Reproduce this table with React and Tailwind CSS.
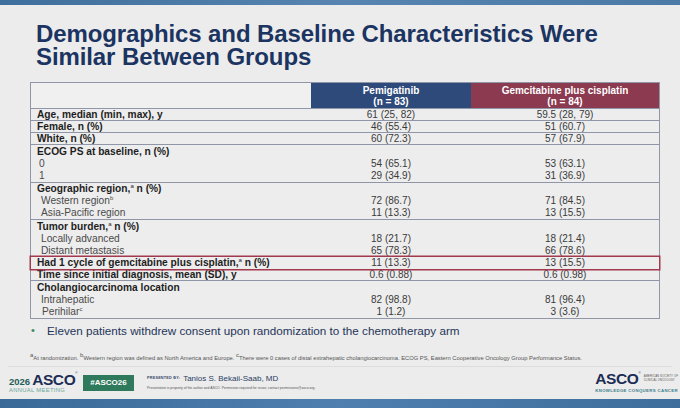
import React from "react";

const F = { fontFamily: '"Liberation Sans", Arial, sans-serif' };

function Row({ label, a, b, bold = true, indent = 0, cls = "" }) {
  return (
    <div className={"grid grid-cols-[280px_160px_188px] h-[12px] leading-[12px] text-[10px] " + cls}>
      <div
        className={(bold ? "font-bold text-[#1e1e1e] text-[10.2px] " : "text-[#4a4a4a] text-[10.2px] ") + (indent === 1 ? "pl-[8px]" : indent === 2 ? "pl-[10px]" : indent === 3 ? "pl-[11px]" : "pl-[6px]")}
      >
        {label}
      </div>
      <div className="text-center text-[#3a3a3a]">{a}</div>
      <div className="text-center text-[#3a3a3a]">{b}</div>
    </div>
  );
}

function Sup({ c }) {
  return <span className="text-[6px] font-normal align-super leading-none">{c}</span>;
}

export default function App() {
  return (
    <div style={F} className="w-[680px] h-[408px] bg-[#ececec] flex flex-col overflow-hidden relative">
      <div className="h-[5px] bg-gradient-to-r from-[#3f6f9c] via-[#5784b0] to-[#4b7aa6] shrink-0" />
      <div className="pl-[36px] pt-[17px] text-[24px] leading-[23px] font-bold text-[#1b3461] tracking-[-0.1px]">
        <div>Demographics and Baseline Characteristics Were</div>
        <div>Similar Between Groups</div>
      </div>
      <div className="ml-[30px] mt-[14px] w-[630px] border border-[#8f96a8] bg-[#ededed]">
        <div className="grid grid-cols-[280px_160px_188px] h-[26px] border-b border-[#8f96a8]">
          <div className="bg-[#f0f0f0]" />
          <div className="bg-[#2e4a7b] text-white text-[10px] font-bold leading-[11px] flex flex-col items-center justify-center">
            <div>Pemigatinib</div>
            <div>(n = 83)</div>
          </div>
          <div className="bg-[#8b3a4f] text-white text-[10px] font-bold leading-[11px] flex flex-col items-center justify-center">
            <div>Gemcitabine plus cisplatin</div>
            <div>(n = 84)</div>
          </div>
        </div>
        <Row label="Age, median (min, max), y" a="61 (25, 82)" b="59.5 (28, 79)" cls="border-b border-[#8f96a8]" />
        <Row label="Female, n (%)" a="46 (55.4)" b="51 (60.7)" cls="border-b border-[#8f96a8]" />
        <Row label="White, n (%)" a="60 (72.3)" b="57 (67.9)" cls="border-b border-[#8f96a8]" />
        <div className="border-b border-[#8f96a8] pt-[1px]">
          <Row label="ECOG PS at baseline, n (%)" a="" b="" />
          <Row label="0" a="54 (65.1)" b="53 (63.1)" bold={false} indent={1} />
          <Row label="1" a="29 (34.9)" b="31 (36.9)" bold={false} indent={1} />
        </div>
        <div className="border-b border-[#8f96a8]">
          <Row label={<>Geographic region,<Sup c="a" /> n (%)</>} a="" b="" />
          <Row label={<>Western region<Sup c="b" /></>} a="72 (86.7)" b="71 (84.5)" bold={false} indent={2} />
          <Row label="Asia-Pacific region" a="11 (13.3)" b="13 (15.5)" bold={false} indent={2} />
        </div>
        <div className="pt-[1px]">
          <Row label={<>Tumor burden,<Sup c="a" /> n (%)</>} a="" b="" />
          <Row label="Locally advanced" a="18 (21.7)" b="18 (21.4)" bold={false} indent={2} />
          <Row label="Distant metastasis" a="65 (78.3)" b="66 (78.6)" bold={false} indent={2} />
        </div>
        <Row
          label={<>Had 1 cycle of gemcitabine plus cisplatin,<Sup c="a" /> n (%)</>}
          a="11 (13.3)"
          b="13 (15.5)"
          cls="ring-[1.5px] ring-[#a3394c] relative"
        />
        <Row label="Time since initial diagnosis, mean (SD), y" a="0.6 (0.88)" b="0.6 (0.98)" cls="border-b border-[#8f96a8]" />
        <div className="pt-[1px]">
          <Row label="Cholangiocarcinoma location" a="" b="" />
          <Row label="Intrahepatic" a="82 (98.8)" b="81 (96.4)" bold={false} indent={2} />
          <Row label={<>Perihilar<Sup c="c" /></>} a="1 (1.2)" b="3 (3.6)" bold={false} indent={3} />
        </div>
      </div>
      <div className="flex items-center ml-[31px] mt-[4px] text-[11.7px] leading-[15px] text-[#1f3559]">
        <span className="text-[#3c8a5c] text-[11px] w-[16px]">•</span>
        <span>Eleven patients withdrew consent upon randomization to the chemotherapy arm</span>
      </div>
      <div className="ml-[30px] mt-[14px] text-[5.8px] leading-[7px] text-[#555] whitespace-nowrap">
        <Sup c="a" />At randomization. <Sup c="b" />Western region was defined as North America and Europe. <Sup c="c" />There were 0 cases of distal extrahepatic cholangiocarcinoma. ECOG PS, Eastern Cooperative Oncology Group Performance Status.
      </div>
      <div className="mx-[8px] mt-[4px] h-px bg-[#dcdcdc]" />
      <div className="flex items-center h-[32px] pl-[9px] pr-[2px]">
        <div className="flex flex-col w-[64px]">
          <div className="flex items-end leading-none">
            <span className="text-[9.5px] font-bold text-[#1f5e5a] mr-[2px] mb-[1px]">2026</span>
            <span className="text-[15.5px] font-bold text-[#1c2c55] tracking-[-0.4px]">ASCO</span>
            <span className="text-[3px] text-[#1c2c55] self-start">®</span>
          </div>
          <div className="text-[5.8px] leading-[7px] text-[#6aa79a] tracking-[0.35px]">ANNUAL MEETING</div>
        </div>
        <div className="ml-[10px] w-[51px] h-[16px] bg-[#2f7a5c] text-white text-[8px] font-bold flex items-center justify-center">#ASCO26</div>
        <div className="ml-[13px] flex flex-col">
          <div className="flex items-center leading-none">
            <span className="text-[3.8px] font-bold text-[#3a4a6a] mr-[3px] tracking-[0.2px]">PRESENTED BY:</span>
            <span className="text-[8px] text-[#2b3d63]">Tanios S. Bekaii-Saab, MD</span>
          </div>
          <div className="text-[3.4px] text-[#555] mt-[3px] whitespace-nowrap">Presentation is property of the author and ASCO. Permission required for reuse; contact permissions@asco.org.</div>
        </div>
        <div className="ml-auto flex flex-col items-end">
          <div className="flex items-center">
            <span className="text-[15.5px] font-bold text-[#1c2c55] leading-none tracking-[-0.4px]">ASCO</span>
            <span className="text-[3px] text-[#1c2c55] self-start mr-[3px]">®</span>
            <div className="flex flex-col text-[2.8px] leading-[3.6px] text-[#555] tracking-[0.1px]">
              <span>AMERICAN SOCIETY OF</span>
              <span>CLINICAL ONCOLOGY</span>
            </div>
          </div>
          <div className="text-[4.3px] font-bold text-[#3f7f8c] tracking-[0.35px] mt-[2px]">KNOWLEDGE CONQUERS CANCER</div>
        </div>
      </div>
      <div className="flex-1 bg-gradient-to-r from-[#3a6a98] via-[#4e7fae] to-[#3d6e9c]" />
    </div>
  );
}
